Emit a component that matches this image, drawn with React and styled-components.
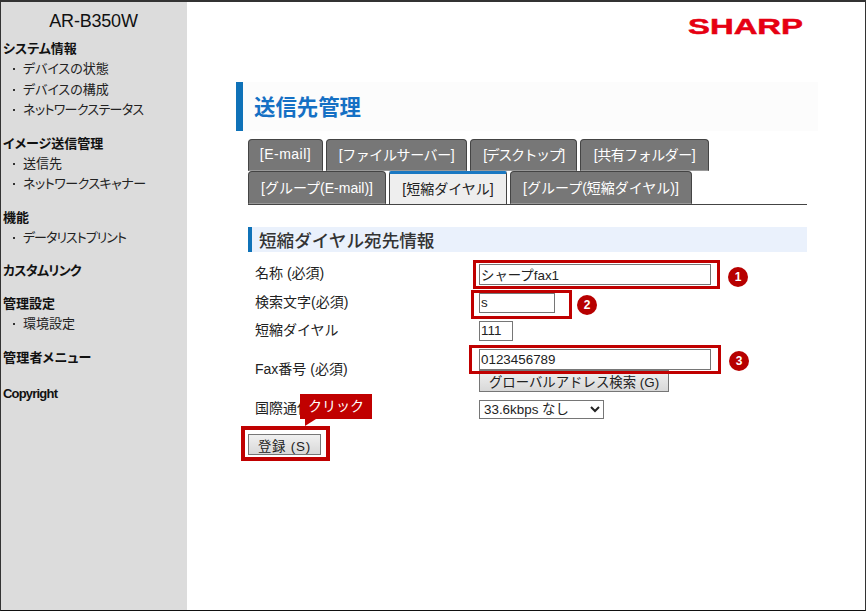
import styled, { createGlobalStyle } from "styled-components";

const GlobalStyle = createGlobalStyle`
  html, body {
    margin: 0;
    padding: 0;
    background: #fff;
  }

  body {
    font-family: "Liberation Sans", "Noto Sans CJK JP", sans-serif;
    color: #222;
  }

  * {
    box-sizing: border-box;
  }
`;

const Frame = styled.div`
  display: flex;
  width: 866px;
  height: 611px;
  overflow: hidden;
  border: 1px solid #333;
  border-top-width: 2px;
  border-bottom-color: #111;
  background: #fff;
`;

const Sidebar = styled.nav`
  width: 186px;
  flex-shrink: 0;
  background: #dcdcdc;
  padding: 9px 0 0 2px;
  font-feature-settings: "palt";
`;

const ModelName = styled.div`
  font-size: 18px;
  line-height: 20px;
  letter-spacing: -0.2px;
  text-align: center;
  padding-right: 3px;
  margin-bottom: 8px;
  color: #111;
`;

const MenuGroup = styled.div`
  margin-bottom: ${(p) => p.$gap || 12}px;
`;

const MenuTitle = styled.div`
  font-size: 13px;
  font-weight: 700;
  line-height: 20px;
  letter-spacing: ${(p) => p.$spacing || 0}px;
  color: #111;
`;

const MenuItem = styled.div`
  position: relative;
  font-size: 13px;
  line-height: 20.5px;
  letter-spacing: ${(p) => p.$spacing || 0}px;
  padding-left: 20px;
  color: #222;

  &::before {
    content: "";
    position: absolute;
    left: 10px;
    top: 9px;
    width: 2px;
    height: 2px;
    background: #333;
  }
`;

const Main = styled.main`
  flex: 1;
  min-width: 0;
  padding: 14px 0 0 49px;
`;

const LogoRow = styled.div`
  display: flex;
  justify-content: flex-end;
  padding-right: 61px;
  height: 66px;
`;

const TitleBar = styled.div`
  display: flex;
  align-items: center;
  width: 582px;
  height: 49px;
  border-left: 7px solid #0f72b8;
  background: #fcfcfc;
  padding: 0 0 2px 11px;
  margin-bottom: 8px;
`;

const PageTitle = styled.h1`
  margin: 0;
  font-size: 21.4px;
  font-weight: 700;
  color: #1570c4;
`;

const TabPanel = styled.div`
  margin-left: 12px;
  width: 559px;
`;

const TabRow = styled.div`
  display: flex;
  gap: 3px;
  height: ${(p) => p.$height}px;
  border-bottom: ${(p) => (p.$ruled ? "1px solid #444" : "none")};
`;

const Tab = styled.div`
  display: flex;
  align-items: center;
  justify-content: center;
  width: ${(p) => p.$width}px;
  padding-bottom: 2px;
  font-size: 14px;
  letter-spacing: ${(p) => p.$spacing || 0}px;
  color: ${(p) => (p.$active ? "#222" : "#fff")};
  background: ${(p) => (p.$active ? "#eee" : "#777")};
  border: 1px solid #444;
  border-top: ${(p) => (p.$active ? "3px solid #1a78c2" : "1px solid #444")};
  border-bottom: ${(p) => (p.$active ? "none" : "1px solid #999")};
  border-radius: ${(p) => (p.$active ? "2px 2px 0 0" : "4px 4px 0 0")};
`;

const SectionTitle = styled.h2`
  display: flex;
  align-items: center;
  height: 25px;
  margin: 22px 0 12px;
  padding-left: 7px;
  border-left: 4px solid #0f72b8;
  background: #eaf1fc;
  font-size: 17.6px;
  font-weight: 500;
  color: #333;
`;

const FormRow = styled.div`
  display: grid;
  grid-template-columns: 224px 1fr;
  align-items: center;
  margin-left: 7px;
  margin-bottom: 8px;
`;

const FieldLabel = styled.label`
  padding-bottom: 3px;
  font-size: 14px;
  line-height: 16px;
  color: #222;
`;

const FieldStack = styled.div`
  display: flex;
  flex-direction: column;
  align-items: flex-start;
`;

const Field = styled.div`
  position: relative;
  width: ${(p) => p.$width}px;
`;

const TextInput = styled.input`
  display: block;
  width: 100%;
  height: ${(p) => p.$height || 21}px;
  padding: 0 1px 1px;
  border: 1px solid #767676;
  border-radius: 0;
  background: #fff;
  font-family: inherit;
  font-size: 13.4px;
  color: #222;
`;

const Highlight = styled.span`
  position: absolute;
  top: ${(p) => p.$top}px;
  right: ${(p) => p.$right}px;
  bottom: ${(p) => p.$bottom}px;
  left: ${(p) => p.$left}px;
  border: ${(p) => p.$thick || 3}px solid #c00000;
  pointer-events: none;
`;

const Badge = styled.span`
  position: absolute;
  top: calc(50% + ${(p) => p.$drop}px);
  left: calc(100% + ${(p) => p.$offset}px);
  width: 20px;
  height: 20px;
  margin-top: -10px;
  border-radius: 50%;
  background: #b70000;
  color: #fff;
  font-size: 12px;
  font-weight: 700;
  line-height: 20px;
  text-align: center;
`;

const GreyButton = styled.button`
  display: block;
  width: ${(p) => p.$width}px;
  height: ${(p) => p.$height}px;
  padding: 0 0 2px;
  border: 1px solid #767676;
  border-radius: 0;
  background: linear-gradient(#f0f0f0, #d8d8d8);
  font-family: inherit;
  font-size: 13.4px;
  letter-spacing: ${(p) => p.$spacing || 0}px;
  color: #222;
`;

const SelectBox = styled.select`
  display: block;
  width: 125px;
  height: 19px;
  padding: 0;
  border: 1px solid #767676;
  border-radius: 0;
  background: #fff;
  font-family: inherit;
  font-size: 13.4px;
  color: #222;
`;

const SubmitArea = styled.div`
  position: relative;
  margin-top: 15px;
  width: 73px;
`;

const Tooltip = styled.div`
  position: absolute;
  left: 52px;
  top: -40px;
  width: 72px;
  height: 25px;
  background: #c00000;
  color: #fff;
  font-size: 14px;
  line-height: 25px;
  text-align: center;

  &::after {
    content: "";
    position: absolute;
    left: 5px;
    top: 25px;
    border-style: solid;
    border-width: 7px 11px 0 0;
    border-color: #c00000 transparent transparent transparent;
  }
`;

const tabRows = [
  [
    { label: "[E-mail]", width: 75, spacing: 0.5 },
    { label: "[ファイルサーバー]", width: 141, spacing: -0.4 },
    { label: "[デスクトップ]", width: 107, spacing: -1.4 },
    { label: "[共有フォルダー]", width: 129, spacing: -0.5 },
  ],
  [
    { label: "[グループ(E-mail)]", width: 138 },
    { label: "[短縮ダイヤル]", width: 118, active: true },
    { label: "[グループ(短縮ダイヤル)]", width: 182 },
  ],
];

const menu = [
  {
    title: "システム情報",
    items: [
      { label: "デバイスの状態" },
      { label: "デバイスの構成" },
      { label: "ネットワークステータス", spacing: -0.65 },
    ],
    gap: 13,
  },
  {
    title: "イメージ送信管理",
    items: [{ label: "送信先" }, { label: "ネットワークスキャナー", spacing: -0.5 }],
    gap: 13.5,
  },
  { title: "機能", items: [{ label: "データリストプリント", spacing: -1 }], gap: 12.5 },
  { title: "カスタムリンク", spacing: -0.7, items: [], gap: 13 },
  { title: "管理設定", items: [{ label: "環境設定" }], gap: 13.5 },
  { title: "管理者メニュー", spacing: 0.2, items: [], gap: 16 },
  { title: "Copyright", spacing: -0.8, items: [] },
];

function SharpLogo() {
  return (
    <svg width="118" height="22" viewBox="0 0 118 22" overflow="visible" aria-label="SHARP">
      <text
        x="2"
        y="18"
        textLength="115"
        lengthAdjust="spacingAndGlyphs"
        fontFamily="Liberation Sans"
        fontWeight="700"
        fontSize="22"
        fill="#e60012"
        stroke="#e60012"
        strokeWidth="0.5"
      >
        SHARP
      </text>
    </svg>
  );
}

export default function App() {
  return (
    <>
      <GlobalStyle />
      <Frame>
        <Sidebar>
          <ModelName>AR-B350W</ModelName>
          {menu.map((group) => (
            <MenuGroup key={group.title} $gap={group.gap}>
              <MenuTitle $spacing={group.spacing}>{group.title}</MenuTitle>
              {group.items.map((item) => (
                <MenuItem key={item.label} $spacing={item.spacing}>
                  {item.label}
                </MenuItem>
              ))}
            </MenuGroup>
          ))}
        </Sidebar>

        <Main>
          <LogoRow>
            <SharpLogo />
          </LogoRow>
          <TitleBar>
            <PageTitle>送信先管理</PageTitle>
          </TitleBar>

          <TabPanel>
            {tabRows.map((row, i) => (
              <TabRow key={i} $height={i === 0 ? 32 : 34} $ruled={i === 1}>
                {row.map((tab) => (
                  <Tab key={tab.label} $width={tab.width} $active={tab.active} $spacing={tab.spacing}>
                    {tab.label}
                  </Tab>
                ))}
              </TabRow>
            ))}

            <SectionTitle>短縮ダイヤル宛先情報</SectionTitle>

            <FormRow>
              <FieldLabel>名称 (必須)</FieldLabel>
              <Field $width={232}>
                <TextInput defaultValue="シャープfax1" />
                <Highlight $top={-4} $right={-9} $bottom={-4} $left={-6} />
                <Badge $offset={17} $drop={2.5}>1</Badge>
              </Field>
            </FormRow>

            <FormRow>
              <FieldLabel>検索文字(必須)</FieldLabel>
              <Field $width={76}>
                <TextInput $height={20} defaultValue="s" />
                <Highlight $top={-3} $right={-17} $bottom={-6} $left={-8} />
                <Badge $offset={22} $drop={2}>2</Badge>
              </Field>
            </FormRow>

            <FormRow>
              <FieldLabel>短縮ダイヤル</FieldLabel>
              <Field $width={34}>
                <TextInput $height={20} defaultValue="111" />
              </Field>
            </FormRow>

            <FormRow>
              <FieldLabel>Fax番号 (必須)</FieldLabel>
              <FieldStack>
                <Field $width={232}>
                  <TextInput defaultValue="0123456789" />
                  <Highlight $top={-4} $right={-10} $bottom={-4} $left={-10} />
                  <Badge $offset={18} $drop={1}>3</Badge>
                </Field>
                <GreyButton type="button" $width={190} $height={22}>
                  グローバルアドレス検索 (G)
                </GreyButton>
              </FieldStack>
            </FormRow>

            <FormRow>
              <FieldLabel>国際通信モード</FieldLabel>
              <SelectBox defaultValue="33.6kbps なし">
                <option>33.6kbps なし</option>
              </SelectBox>
            </FormRow>

            <SubmitArea>
              <GreyButton type="button" $width={73} $height={21} $spacing={0.8}>
                登録 (S)
              </GreyButton>
              <Highlight $thick={4} $top={-8} $right={-9} $bottom={-6} $left={-7} />
              <Tooltip>クリック</Tooltip>
            </SubmitArea>
          </TabPanel>
        </Main>
      </Frame>
    </>
  );
}
